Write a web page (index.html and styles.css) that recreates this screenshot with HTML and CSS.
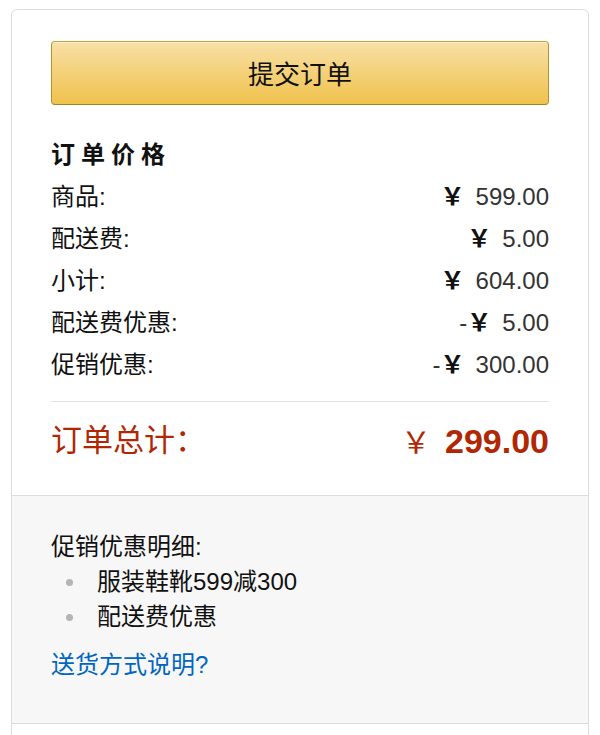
FILE: index.html
```html
<!DOCTYPE html>
<html lang="zh-CN">
<head>
<meta charset="utf-8">
<title>订单</title>
<link rel="stylesheet" href="styles.css">
</head>
<body>
<div class="card">
  <div class="summary">
    <button class="submit" type="button">提交订单</button>
    <h5 class="title">订单价格</h5>
    <div class="row"><span>商品:</span><span class="amt"><span class="yen">￥</span>599.00</span></div>
    <div class="row"><span>配送费:</span><span class="amt"><span class="yen">￥</span>5.00</span></div>
    <div class="row"><span>小计:</span><span class="amt"><span class="yen">￥</span>604.00</span></div>
    <div class="row"><span>配送费优惠:</span><span class="amt">-<span class="yen">￥</span>5.00</span></div>
    <div class="row"><span>促销优惠:</span><span class="amt">-<span class="yen">￥</span>300.00</span></div>
    <hr class="sep">
    <div class="total"><span>订单总计：</span><span class="total-amt"><span class="yen">￥</span>299.00</span></div>
  </div>
  <div class="promo">
    <div class="promo-title">促销优惠明细:</div>
    <ul class="promo-list">
      <li>服装鞋靴599减300</li>
      <li>配送费优惠</li>
    </ul>
    <a class="ship-link" href="#">送货方式说明?</a>
  </div>
  <div class="more"></div>
</div>
</body>
</html>
```

FILE: styles.css
```css
html, body {
  margin: 0;
  padding: 0;
  background: #fff;
}
body {
  font-family: "Liberation Sans", "Noto Sans CJK SC", sans-serif;
  color: #111;
  font-size: 24px;
}
.card {
  box-sizing: border-box;
  width: 578px;
  margin: 9px 0 0 11px;
  border: 1px solid #dcdcdc;
  border-radius: 6px;
  overflow: hidden;
}
.summary {
  padding: 31px 39px 33px 39px;
}
.submit {
  display: block;
  box-sizing: border-box;
  width: 100%;
  height: 64px;
  margin: 0;
  padding: 0;
  border: 1px solid;
  border-color: #c9a240 #b8912f #a8821f;
  border-radius: 4px;
  background: linear-gradient(to bottom, #f8e0a6, #f0c24c);
  box-shadow: inset 0 1px 0 rgba(255,255,255,0.5);
  font-family: "Noto Sans CJK SC", sans-serif;
  font-size: 26px;
  color: #111;
  line-height: 62px;
  cursor: pointer;
}
.title {
  margin: 29px 0 0 0;
  font-size: 24px;
  font-weight: bold;
  line-height: 42px;
  letter-spacing: 6px;
  color: #111;
}
.row {
  display: flex;
  justify-content: space-between;
  line-height: 42px;
  height: 42px;
}
.amt {
  color: #333;
}
.yen {
  display: inline-block;
  font-family: "Noto Sans CJK SC", sans-serif;
  font-weight: bold;
  line-height: 20px;
  color: #111;
  margin-right: 11px;
}
.sep {
  margin: 15px 0 0 0;
  border: 0;
  border-top: 1px solid #e3e3e3;
  height: 0;
}
.total {
  display: flex;
  justify-content: space-between;
  margin-top: 18px;
  line-height: 42px;
  height: 42px;
  color: #b12704;
  font-size: 31px;
}
.total-amt {
  font-weight: bold;
  font-size: 34px;
}
.total-amt .yen {
  font-weight: normal;
  color: #b12704;
  font-size: 30px;
  margin-right: 14px;
}
.promo {
  background: #f7f7f7;
  border-top: 1px solid #dcdcdc;
  border-bottom: 1px solid #dcdcdc;
  padding: 33px 39px 41px 39px;
}
.promo-title {
  line-height: 35px;
  color: #111;
}
.promo-list {
  list-style: none;
  margin: 0;
  padding: 0;
}
.promo-list li {
  position: relative;
  padding-left: 46px;
  line-height: 35px;
  color: #111;
}
.promo-list li::before {
  content: "";
  position: absolute;
  left: 15px;
  top: 15px;
  width: 7px;
  height: 7px;
  border-radius: 50%;
  background: #b5b5b5;
}
.ship-link {
  display: inline-block;
  margin-top: 13px;
  line-height: 35px;
  color: #0066c0;
  text-decoration: none;
}
.more {
  height: 40px;
  background: #fff;
}
```
